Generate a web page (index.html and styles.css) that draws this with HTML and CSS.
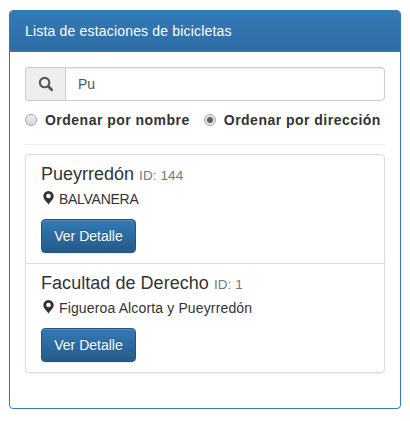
FILE: index.html
```html
<!DOCTYPE html>
<html lang="es">
<head>
<meta charset="utf-8">
<title>Lista de estaciones de bicicletas</title>
<link rel="stylesheet" href="styles.css">
</head>
<body>
<section class="panel">
  <header class="panel-heading">Lista de estaciones de bicicletas</header>
  <div class="panel-body">
    <div class="input-group">
      <span class="addon">
        <svg width="16" height="16" viewBox="0 0 16 16"><circle cx="6.6" cy="6.6" r="4.700" fill="none" stroke="#555" stroke-width="2.1"/><path d="M10.200 10.200L13.700 13.700" stroke="#555" stroke-width="2.700" stroke-linecap="round"/></svg>
      </span>
      <input class="search" type="text" value="Pu" aria-label="Buscar">
    </div>
    <div class="sort">
      <label class="option"><input class="radio" type="radio" name="orden">Ordenar por nombre</label>
      <label class="option"><input class="radio" type="radio" name="orden" checked>Ordenar por dirección</label>
    </div>
    <hr class="rule">
    <ul class="list">
      <li class="item">
        <h4 class="name">Pueyrredón <small class="id">ID: 144</small></h4>
        <p class="place barrio"><svg class="pin" width="14" height="14" viewBox="0 0 14 14"><path fill="#333" fill-rule="evenodd" d="M7.500 0a5.200 5.200 0 0 0-5.200 5.200c0 3 3.600 5.200 5.200 8.500 1.600-3.300 5.200-5.500 5.200-8.500a5.200 5.200 0 0 0-5.200-5.200zm0 2.700a2.300 2.300 0 1 1 0 4.600 2.300 2.300 0 0 1 0-4.600z"/></svg>BALVANERA</p>
        <button class="btn" type="button">Ver Detalle</button>
      </li>
      <li class="item">
        <h4 class="name wide">Facultad de Derecho <small class="id">ID: 1</small></h4>
        <p class="place"><svg class="pin" width="14" height="14" viewBox="0 0 14 14"><path fill="#333" fill-rule="evenodd" d="M7.500 0a5.200 5.200 0 0 0-5.200 5.200c0 3 3.600 5.200 5.200 8.500 1.600-3.300 5.200-5.500 5.200-8.500a5.200 5.200 0 0 0-5.200-5.200zm0 2.700a2.300 2.300 0 1 1 0 4.600 2.300 2.300 0 0 1 0-4.600z"/></svg>Figueroa Alcorta y Pueyrredón</p>
        <button class="btn" type="button">Ver Detalle</button>
      </li>
    </ul>
  </div>
</section>
</body>
</html>
```
FILE: styles.css
```css
* { box-sizing: border-box; }
body {
  margin: 0;
  padding: 10px 9px 0;
  background: #fff;
  color: #333;
  font: 14px/20px "Liberation Sans", Arial, sans-serif;
}
.panel {
  height: 399px;
  border: 1px solid #337ab7;
  border-radius: 4px;
  box-shadow: 0 1px 2px rgba(0,0,0,.05);
}
.panel-heading {
  height: 41px;
  padding: 10px 15px;
  color: #fff;
  background: linear-gradient(#337ab7, #2e6da4);
  border-bottom: 1px solid #337ab7;
  border-radius: 3px 3px 0 0;
  letter-spacing: .18px;
}
.panel-body { padding: 15px; }
.input-group { display: flex; height: 34px; }
.addon {
  width: 40px;
  display: flex;
  align-items: center;
  justify-content: center;
  background: #eee;
  border: 1px solid #ccc;
  border-right: 0;
  border-radius: 4px 0 0 4px;
}
.search {
  flex: 1;
  min-width: 0;
  padding: 6px 12px;
  border: 1px solid #ccc;
  border-radius: 0 4px 4px 0;
  box-shadow: inset 0 1px 1px rgba(0,0,0,.075);
  color: #555;
  font: inherit;
}
.sort { display: flex; gap: 14px; margin-top: 9px; white-space: nowrap; }
.option { display: flex; align-items: center; font-weight: bold; letter-spacing: .48px; }
.radio {
  appearance: none;
  flex: none;
  width: 12px;
  height: 12px;
  margin: 0 8px 0 0;
  border: 1px solid #a9a9a9;
  border-radius: 50%;
  background: linear-gradient(#eee, #d9d9d9);
}
.radio:checked { background: radial-gradient(circle, #606060 0 2.500px, #e2e2e2 3.500px); }
.rule { margin: 14px 0 9px; border: 0; border-top: 1px solid #eee; }
.list {
  margin: 0;
  padding: 0;
  list-style: none;
  border-radius: 4px;
  box-shadow: 0 1px 2px rgba(0,0,0,.075);
}
.item { padding: 10px 15px; border: 1px solid #ddd; }
.item:first-child { border-radius: 4px 4px 0 0; }
.item:last-child { margin-top: -1px; border-radius: 0 0 4px 4px; }
.name { margin: 0 0 5px; font-size: 18px; font-weight: 400; line-height: 19px; white-space: nowrap; }
.wide { letter-spacing: .04px; }
.id { color: #777; font-size: 13.5px; line-height: 1; letter-spacing: .1px; }
.place { display: flex; margin: 0 0 10px; gap: 4px; white-space: nowrap; letter-spacing: .14px; }
.barrio { letter-spacing: -.28px; }
.pin { margin-top: 2px; }
.btn {
  display: block;
  width: 95px;
  height: 34px;
  padding: 0;
  border: 1px solid #245580;
  border-radius: 4px;
  background: linear-gradient(#337ab7, #265a88);
  box-shadow: inset 0 1px 0 rgba(255,255,255,.15), 0 1px 1px rgba(0,0,0,.075);
  color: #fff;
  font: inherit;
  text-shadow: 0 -1px 0 rgba(0,0,0,.2);
}
```
